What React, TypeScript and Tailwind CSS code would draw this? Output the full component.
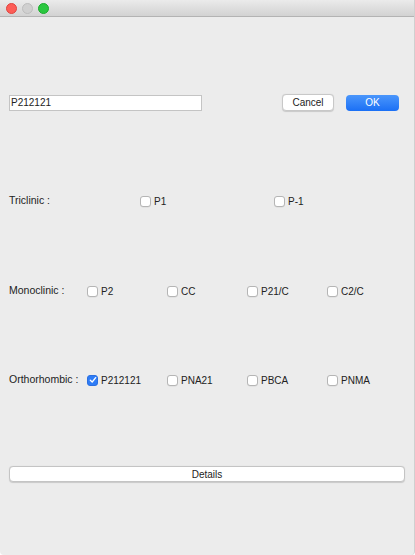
import React from "react";

type Option = { label: string; checked?: boolean };

const Checkbox: React.FC<Option> = ({ label, checked }) => (
  <div className="flex items-center gap-[3px] text-[10px]">
    {checked ? (
      <div className="w-[11px] h-[11px] rounded-[3px] bg-[#2e7cf6] border border-[#2a6fe0] flex items-center justify-center">
        <svg width="8" height="8" viewBox="0 0 8 8">
          <path d="M1.3 4.2 L3.2 6 L6.7 1.6" fill="none" stroke="white" strokeWidth="1.3" strokeLinecap="round" strokeLinejoin="round" />
        </svg>
      </div>
    ) : (
      <div className="w-[11px] h-[11px] rounded-[3px] bg-white border border-[#b5b5b5] shadow-[0_0.5px_0.5px_rgba(0,0,0,0.08)]" />
    )}
    <span>{label}</span>
  </div>
);

const Row: React.FC<{ title: string; labelWidth: string; colWidth: string; options: Option[]; className: string }> = ({
  title,
  labelWidth,
  colWidth,
  options,
  className,
}) => (
  <div className={`flex items-center h-[16px] pl-[9px] ${className}`}>
    <div className={labelWidth}>{title}</div>
    {options.map((o, i) => (
      <div key={i} className={colWidth}>
        <Checkbox {...o} />
      </div>
    ))}
  </div>
);

export default function App() {
  return (
    <div
      className="w-[415px] h-[555px] bg-[#ececec] text-[#222] text-[10.5px] flex flex-col overflow-hidden rounded-b-[4px] border-r border-[#d0d0d0]"
      style={{ fontFamily: '"Liberation Sans", Arial, sans-serif' }}
    >
      {/* title bar */}
      <div className="h-[17px] bg-gradient-to-b from-[#ebebeb] to-[#d2d2d2] border-b border-[#b3b3b3] flex items-center gap-[5px] pl-[6px] shrink-0">
        <div className="w-[11px] h-[11px] rounded-full bg-[#fd5d57] border border-[#e0443e]" />
        <div className="w-[11px] h-[11px] rounded-full bg-[#d0d0d0] border border-[#bdbdbd]" />
        <div className="w-[11px] h-[11px] rounded-full bg-[#2ac73f] border border-[#1aab2c]" />
      </div>

      {/* search row */}
      <div className="flex items-center h-[17px] mt-[77px] pl-[9px] pr-[15px]">
        <div className="w-[193px] h-[16px] bg-white border border-[#c4c4c4] flex items-center pl-[1px] text-[10px]">
          P212121
        </div>
        <div className="flex-1" />
        <button className="w-[52px] h-[17px] bg-white border border-[#c8c8c8] rounded-[4px] shadow-[0_0.5px_1px_rgba(0,0,0,0.15)] text-[10px] flex items-center justify-center">
          Cancel
        </button>
        <button className="ml-[12px] w-[53px] h-[16px] rounded-[4px] bg-gradient-to-b from-[#4a96fb] to-[#1a6ff5] text-white text-[10px] flex items-center justify-center">
          OK
        </button>
      </div>

      <Row
        className="mt-[82px]"
        title="Triclinic :"
        labelWidth="w-[131px]"
        colWidth="w-[134px]"
        options={[{ label: "P1" }, { label: "P-1" }]}
      />

      <Row
        className="mt-[74px]"
        title="Monoclinic :"
        labelWidth="w-[78px]"
        colWidth="w-[80px]"
        options={[{ label: "P2" }, { label: "CC" }, { label: "P21/C" }, { label: "C2/C" }]}
      />

      <Row
        className="mt-[73px]"
        title="Orthorhombic :"
        labelWidth="w-[78px]"
        colWidth="w-[80px]"
        options={[{ label: "P212121", checked: true }, { label: "PNA21" }, { label: "PBCA" }, { label: "PNMA" }]}
      />

      <div className="mt-[78px] px-[9px]">
        <button className="w-[396px] h-[16px] bg-white border border-[#c4c4c4] rounded-[4px] shadow-[0_0.5px_1px_rgba(0,0,0,0.15)] text-[10px] flex items-center justify-center">
          Details
        </button>
      </div>
    </div>
  );
}
